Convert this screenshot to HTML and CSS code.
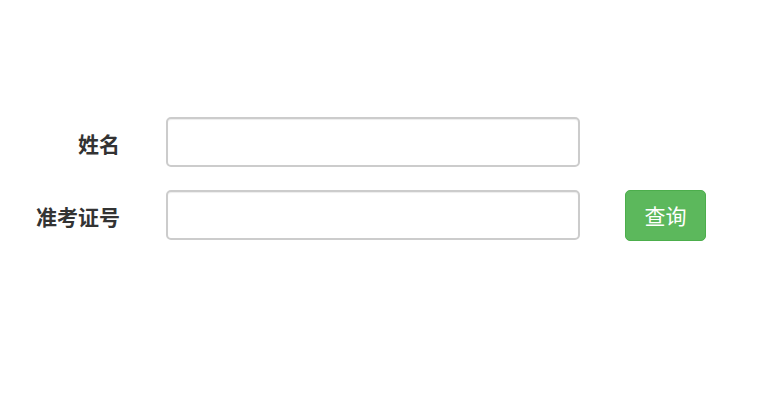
FILE: index.html
```html
<!DOCTYPE html>
<html>
<head>
    <meta charset="utf-8">
    <meta name="viewport" content="width=device-width, initial-scale=1.0">
    <link rel="stylesheet" href="styles.css">
</head>
<body>
    <form id="queryForm" class="query-form">
        <div class="form-row">
            <label class="form-label" for="name">姓名</label>
            <input class="form-input" type="text" id="name">
        </div>
        <div class="form-row">
            <label class="form-label" for="ticket">准考证号</label>
            <input class="form-input" type="text" id="ticket">
            <button class="btn-query" type="button">查询</button>
        </div>
    </form>
</body>
</html>
```

FILE: styles.css
```css
body {
    margin: 0;
    font-family: "Liberation Sans", "Noto Sans CJK SC", sans-serif;
    background-color: #fff;
    color: #333;
}

.query-form {
    padding-top: 117px;
}

.form-row {
    display: flex;
    align-items: center;
    height: 50px;
    margin-bottom: 23px;
}

.form-label {
    width: 120px;
    text-align: right;
    font-size: 21px;
    font-weight: bold;
    color: #333;
    padding-top: 1px;
    box-sizing: border-box;
}

.form-input {
    width: 414px;
    height: 50px;
    margin-left: 46px;
    box-sizing: border-box;
    border: 2px solid #ccc;
    border-radius: 5px;
    box-shadow: inset 0 1px 1px rgba(0, 0, 0, 0.075);
    font-size: 18px;
    padding: 6px 12px;
}

.btn-query {
    width: 81px;
    height: 51px;
    margin-left: 45px;
    box-sizing: border-box;
    background-color: #5cb85c;
    border: 1px solid #4cae4c;
    border-radius: 5px;
    color: #fff;
    font-family: "Noto Sans CJK SC", sans-serif;
    font-size: 21px;
    cursor: pointer;
}
```
